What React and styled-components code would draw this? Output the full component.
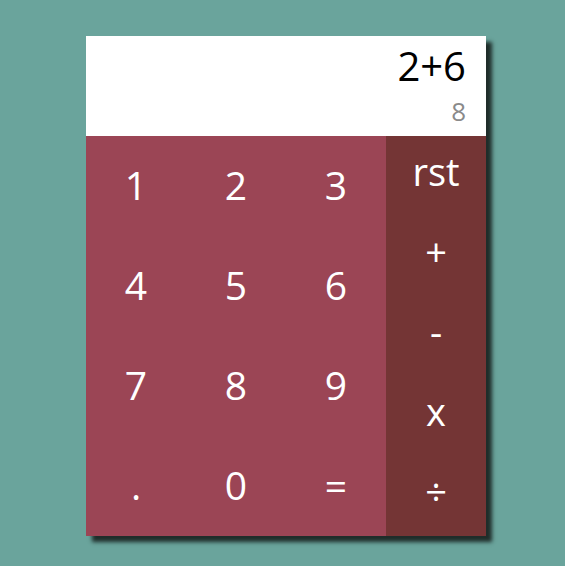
import React from "react";
import styled, { createGlobalStyle } from "styled-components";

const GlobalStyle = createGlobalStyle`
  html, body {
    margin: 0;
    padding: 0;
    background: #6aa49c;
    font-family: "Open Sans", "DejaVu Sans", sans-serif;
  }
`;

const numbers = ["1", "2", "3", "4", "5", "6", "7", "8", "9", ".", "0", "="];
const operators = ["rst", "+", "-", "x", "÷"];

const App = () => {
  return (
    <Page>
      <GlobalStyle />
      <Calculator>
        <Display>
          <Expression>2+6</Expression>
          <Result>8</Result>
        </Display>
        <Keypad>
          <Numbers>
            {numbers.map((n, index) => (
              <NumKey key={index}>{n}</NumKey>
            ))}
          </Numbers>
          <Operators>
            {operators.map((op, index) => (
              <OpKey key={index}>{op}</OpKey>
            ))}
          </Operators>
        </Keypad>
      </Calculator>
    </Page>
  );
};

export default App;

const Page = styled.div`
  width: 565px;
  height: 566px;
  padding-top: 36px;
  padding-left: 86px;
  box-sizing: border-box;
`;

const Calculator = styled.div`
  width: 400px;
  height: 500px;
  display: flex;
  flex-direction: column;
  box-shadow: 6px 6px 4px #1f2d2a;
`;

const Display = styled.div`
  height: 100px;
  background: #ffffff;
  display: flex;
  flex-direction: column;
  align-items: flex-end;
  padding-right: 20px;
  box-sizing: border-box;
`;

const Expression = styled.div`
  font-size: 40px;
  line-height: 60px;
  color: #000;
`;

const Result = styled.div`
  font-size: 26px;
  line-height: 30px;
  color: #8a8a8a;
`;

const Keypad = styled.div`
  flex: 1;
  display: flex;
`;

const Numbers = styled.div`
  width: 300px;
  background: #9b4555;
  display: grid;
  grid-template-columns: repeat(3, 1fr);
  grid-template-rows: repeat(4, 1fr);
`;

const NumKey = styled.div`
  display: flex;
  align-items: center;
  justify-content: center;
  padding-bottom: 4px;
  color: #fff;
  font-size: 39px;
`;

const Operators = styled.div`
  width: 100px;
  background: #743535;
  display: flex;
  flex-direction: column;
`;

const OpKey = styled.div`
  flex: 1;
  display: flex;
  align-items: center;
  justify-content: center;
  padding-bottom: 10px;
  color: #fff;
  font-size: 38px;
`;
